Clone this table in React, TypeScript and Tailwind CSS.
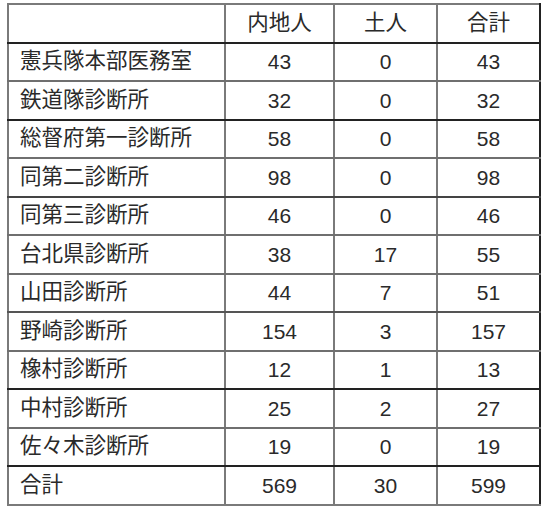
const rows: [string, string, string, string, string][] = [
  ["憲兵隊本部医務室", "43", "0", "43", "border-b-[#6f6f6f]"],
  ["鉄道隊診断所", "32", "0", "32", "border-b-[#222]"],
  ["総督府第一診断所", "58", "0", "58", "border-b-[#6f6f6f]"],
  ["同第二診断所", "98", "0", "98", "border-b-[#444]"],
  ["同第三診断所", "46", "0", "46", "border-b-[#6f6f6f]"],
  ["台北県診断所", "38", "17", "55", "border-b-[#6f6f6f]"],
  ["山田診断所", "44", "7", "51", "border-b-[#555]"],
  ["野崎診断所", "154", "3", "157", "border-b-[#6f6f6f]"],
  ["橡村診断所", "12", "1", "13", "border-b-[#222]"],
  ["中村診断所", "25", "2", "27", "border-b-[#6f6f6f]"],
  ["佐々木診断所", "19", "0", "19", "border-b-[#222]"],
  ["合計", "569", "30", "599", "border-b-[#7a7a7a]"],
];

export default function App() {
  return (
    <div className="min-h-[514px] w-[544px] bg-white pl-[7px] pt-[3px]">
      <table
        className="table-fixed border-collapse text-[21px] leading-none text-[#2a2a2a]"
        style={{ fontFamily: '"Liberation Sans", "Noto Sans CJK JP", sans-serif' }}
      >
        <colgroup>
          <col className="w-[217px]" />
          <col className="w-[109px]" />
          <col className="w-[103px]" />
          <col className="w-[103px]" />
        </colgroup>
        <thead>
          <tr>
            <th className="h-[38.5px] border-2 border-[#7a7a7a] border-b-[#222] p-0 font-normal"></th>
            <th className="h-[38.5px] border-2 border-[#7a7a7a] border-b-[#222] p-0 text-[21.5px] font-normal">内地人</th>
            <th className="h-[38.5px] border-2 border-[#7a7a7a] border-b-[#222] p-0 text-[21.5px] font-normal">土人</th>
            <th className="h-[38.5px] border-2 border-[#7a7a7a] border-b-[#222] border-r-[#222] p-0 text-[21.5px] font-normal">合計</th>
          </tr>
        </thead>
        <tbody>
          {rows.map(([name, a, b, c, line]) => (
            <tr key={name}>
              <td className={`h-[38.5px] border-2 border-[#7a7a7a] ${line} py-0 pl-[11px] text-left text-[21.5px]`}>{name}</td>
              <td className={`h-[38.5px] border-2 border-[#7a7a7a] ${line} p-0 text-center`}>{a}</td>
              <td className={`h-[38.5px] border-2 border-[#7a7a7a] ${line} p-0 text-center`}>{b}</td>
              <td className={`h-[38.5px] border-2 border-[#7a7a7a] border-r-[#222] ${line} p-0 text-center`}>{c}</td>
            </tr>
          ))}
        </tbody>
      </table>
    </div>
  );
}
